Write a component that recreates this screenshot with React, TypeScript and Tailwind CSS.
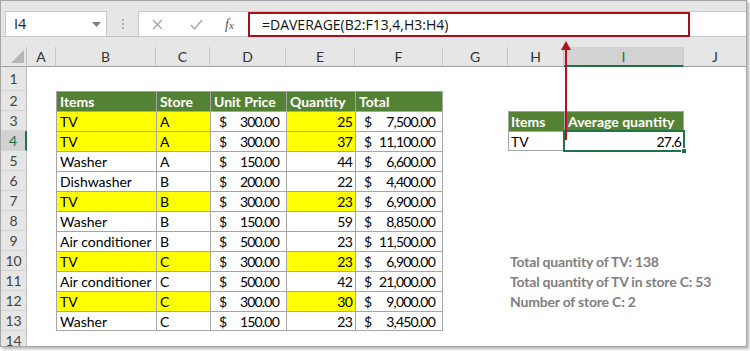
import React from 'react'

type Row = {
  item: string
  store: string
  price: string
  qty: number
  total: string
  tv?: boolean
}

const rows: Row[] = [
  { item: 'TV', store: 'A', price: '300.00', qty: 25, total: '7,500.00', tv: true },
  { item: 'TV', store: 'A', price: '300.00', qty: 37, total: '11,100.00', tv: true },
  { item: 'Washer', store: 'A', price: '150.00', qty: 44, total: '6,600.00' },
  { item: 'Dishwasher', store: 'B', price: '200.00', qty: 22, total: '4,400.00' },
  { item: 'TV', store: 'B', price: '300.00', qty: 23, total: '6,900.00', tv: true },
  { item: 'Washer', store: 'B', price: '150.00', qty: 59, total: '8,850.00' },
  { item: 'Air conditioner', store: 'B', price: '500.00', qty: 23, total: '11,500.00' },
  { item: 'TV', store: 'C', price: '300.00', qty: 23, total: '6,900.00', tv: true },
  { item: 'Air conditioner', store: 'C', price: '500.00', qty: 42, total: '21,000.00' },
  { item: 'TV', store: 'C', price: '300.00', qty: 30, total: '9,000.00', tv: true },
  { item: 'Washer', store: 'C', price: '150.00', qty: 23, total: '3,450.00' },
]

const cols = ['A', 'B', 'C', 'D', 'E', 'F', 'G', 'H', 'I', 'J']

const notes: Record<number, string> = {
  10: 'Total quantity of TV: 138',
  11: 'Total quantity of TV in store C: 53',
  12: 'Number of store C: 2',
}

const cell = 'flex items-center whitespace-nowrap'
const boxed = 'border-l border-t border-[#a6a6a6]'
const head = 'bg-[#548235] text-white font-bold'
// Calibri digits are narrower than Lato's
const num = 'tracking-[-0.8px]'

function RowHeader({ n }: { n: number }) {
  const active = n === 4
  return (
    <div
      className={`flex items-center justify-center border-b border-[#d4d4d4] text-[14px] ${
        active
          ? 'bg-[#d2d2d2] text-[#217346] border-r-2 border-r-[#217346]'
          : 'bg-[#e6e6e6] text-[#444] border-r border-r-[#bdbdbd]'
      }`}
    >
      {n}
    </div>
  )
}

// content of one sheet cell, by row number and column letter
function Cell({ n, c }: { n: number; c: string }) {
  if (n === 2 && 'BCDEF'.includes(c)) {
    const label: Record<string, string> = { B: 'Items', C: 'Store', D: 'Unit Price', E: 'Quantity', F: 'Total' }
    return <div className={`${cell} ${boxed} ${c === 'F' ? 'border-r' : ''} ${head} pl-[3px]`}>{label[c]}</div>
  }
  if (n >= 3 && n <= 13 && 'BCDEF'.includes(c)) {
    const r = rows[n - 3]
    const bb = n === 13 ? 'border-b' : ''
    const yellow = r.tv ? 'bg-[#ffff00]' : ''
    if (c === 'B') return <div className={`${cell} ${boxed} ${bb} ${yellow} pl-[3px]`}>{r.item}</div>
    if (c === 'C') return <div className={`${cell} ${boxed} ${bb} ${yellow} pl-[3px]`}>{r.store}</div>
    if (c === 'E') return <div className={`${cell} ${boxed} ${bb} ${yellow} ${num} justify-end pr-[3px]`}>{r.qty}</div>
    return (
      <div className={`${cell} ${boxed} ${bb} ${c === 'F' ? 'border-r' : ''} justify-between pl-[8px] pr-[7px]`}>
        <span>$</span>
        <span className={num}>{c === 'D' ? r.price : r.total}</span>
      </div>
    )
  }
  if (n === 3 && c === 'H') return <div className={`${cell} ${boxed} ${head} pl-[2px]`}>Items</div>
  if (n === 3 && c === 'I') return <div className={`${cell} ${boxed} border-r ${head} pl-[3px]`}>Average quantity</div>
  if (n === 4 && c === 'H') return <div className={`${cell} ${boxed} border-b pl-[2px]`}>TV</div>
  if (n === 4 && c === 'I')
    return (
      <div className={`${cell} ${num} relative justify-end pr-[3px]`}>
        27.6
        <div className="absolute -left-[1px] -top-[1px] -right-[1px] -bottom-[1px] border-2 border-[#217346]" />
        <div className="absolute -right-[3px] -bottom-[3px] w-[6px] h-[6px] bg-[#217346] border border-white" />
      </div>
    )
  if (c === 'H' && notes[n])
    return <div className={`${cell} pl-[2px] font-bold text-[#7f7f7f] tracking-[-0.2px]`}>{notes[n]}</div>
  return <div />
}

function Sheet() {
  const out: React.ReactNode[] = []
  out.push(
    <div key="corner" className="relative bg-[#e6e6e6] border-r border-b border-r-[#bdbdbd] border-b-[#a0a0a0]">
      <svg className="absolute right-[2px] bottom-[2px]" width="14" height="14" viewBox="0 0 14 14">
        <polygon points="14,0 14,13 1,13" fill="#b5b5b5" />
      </svg>
    </div>
  )
  cols.forEach((c) => {
    const active = c === 'I'
    out.push(
      <div
        key={'h' + c}
        className={`flex items-center justify-center text-[14px] border-r border-r-[#c8c8c8] ${
          active
            ? 'bg-[#d2d2d2] text-[#217346] border-b-2 border-b-[#217346]'
            : 'bg-[#e6e6e6] text-[#333] border-b border-b-[#a0a0a0]'
        }`}
      >
        {c}
      </div>
    )
  })
  for (let n = 1; n <= 14; n++) {
    out.push(<RowHeader key={'r' + n} n={n} />)
    cols.forEach((c) => out.push(<Cell key={`${c}${n}`} n={n} c={c} />))
  }
  return out
}

export default function App() {
  return (
    <div className="w-[750px] h-[351px] bg-white" style={{ fontFamily: 'Lato, "Liberation Sans", sans-serif' }}>
      <div className="relative w-[747px] h-[347px] border border-[#a6a6a6] bg-[#e6e6e6] overflow-hidden shadow-[2px_2px_3px_rgba(0,0,0,0.3)]">
        {/* formula bar */}
        <div className="flex items-start h-[36px] pt-[10px] border-b border-[#c6c6c6]">
          <div
            className="ml-[4px] w-[102px] h-[26px] flex items-center justify-between border border-[#c6c6c6] bg-white pl-[8px] pr-[5px] text-[14.5px] text-[#222]"
            style={{ fontFamily: '"Open Sans", sans-serif' }}
          >
            <span>I4</span>
            <svg width="9" height="5" viewBox="0 0 9 5">
              <polygon points="0,0 9,0 4.5,5" fill="#808080" />
            </svg>
          </div>
          <div className="w-[31px] h-[26px] flex flex-col items-center justify-center gap-[2px]">
            <span className="w-[2px] h-[2px] bg-[#b0b0b0]" />
            <span className="w-[2px] h-[2px] bg-[#b0b0b0]" />
            <span className="w-[2px] h-[2px] bg-[#b0b0b0]" />
          </div>
          <div className="w-[110px] h-[26px] flex items-center bg-white border-y border-l border-[#c6c6c6]">
            <svg className="ml-[13px]" width="11" height="11" viewBox="0 0 11 11">
              <path d="M1 1 L10 10 M10 1 L1 10" stroke="#a6a6a6" strokeWidth="1.3" fill="none" />
            </svg>
            <svg className="ml-[27px]" width="13" height="11" viewBox="0 0 13 11">
              <path d="M1 6 L4.5 10 L12 1" stroke="#a6a6a6" strokeWidth="1.4" fill="none" />
            </svg>
            <span className="ml-[22px] text-[14px] italic text-[#555]" style={{ fontFamily: '"Liberation Serif", serif' }}>
              f<span className="text-[11px]">x</span>
            </span>
          </div>
          <div className="flex-1 h-[26px] bg-white border-y border-[#c6c6c6] flex">
            <div
              className="w-[442px] h-[25px] border-2 border-[#a50e1a] flex items-center pl-[12px] text-[14px] text-[#111]"
              style={{ fontFamily: '"Open Sans", sans-serif' }}
            >
              =DAVERAGE(B2:F13,4,H3:H4)
            </div>
          </div>
        </div>
        <div className="h-[10px]" />
        {/* worksheet */}
        <div
          className="grid text-[14px] text-black bg-white"
          style={{
            gridTemplateColumns: '26px 29px 100px 54px 76px 69px 88px 65px 56px 120px 63px',
            gridTemplateRows: '20px 24px repeat(12, 20px) 20px',
          }}
        >
          <Sheet />
        </div>
        {/* arrow from formula to cell */}
        <svg className="absolute left-[559px] top-[38px]" width="12" height="102" viewBox="0 0 12 102">
          <line x1="6" y1="6" x2="6" y2="101" stroke="#b5121b" strokeWidth="2" />
          <polygon points="6,2 1,11 11,11" fill="#b5121b" />
        </svg>
      </div>
    </div>
  )
}
